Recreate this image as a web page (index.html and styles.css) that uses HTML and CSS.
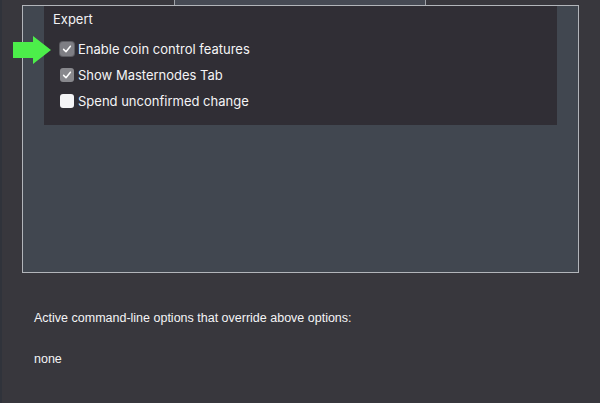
FILE: index.html
```html
<!DOCTYPE html>
<html>
<head>
<meta charset="utf-8">
<link rel="stylesheet" href="styles.css">
</head>
<body>
<div class="page">
  <div class="tabbar"><div class="tab"></div></div>
  <div class="frame">
    <div class="panel">
      <div class="title">Expert</div>
      <div class="row">
        <span class="box checked focus"><svg viewBox="0 0 14 14" width="14" height="14"><path d="M3.6 7.4 L6 9.8 L10.4 4.2" fill="none" stroke="#fff" stroke-width="1.5" stroke-linecap="round" stroke-linejoin="round"/></svg></span>
        <span class="label">Enable coin control features</span>
      </div>
      <div class="row">
        <span class="box checked"><svg viewBox="0 0 14 14" width="14" height="14"><path d="M3.6 7.4 L6 9.8 L10.4 4.2" fill="none" stroke="#fff" stroke-width="1.5" stroke-linecap="round" stroke-linejoin="round"/></svg></span>
        <span class="label">Show Masternodes Tab</span>
      </div>
      <div class="row">
        <span class="box empty"></span>
        <span class="label">Spend unconfirmed change</span>
      </div>
    </div>
  </div>
  <div class="info">
    <p class="line">Active command-line options that override above options:</p>
    <p class="line none">none</p>
  </div>
  <svg class="arrow" viewBox="0 0 60 70" width="60" height="70">
    <polygon points="13,42 33,42 33,36 51,50 33,64 33,58 13,58" fill="#4cee4a"/>
  </svg>
</div>
</body>
</html>
```

FILE: styles.css
```css
html, body {
  margin: 0;
  padding: 0;
  background: #38373d;
}
.page {
  position: relative;
  width: 600px;
  height: 403px;
  overflow: hidden;
  background: #38373d;
  border-left: 2px solid #30333b;
  box-sizing: border-box;
}
.tabbar {
  height: 5px;
  display: flex;
}
.tab {
  margin-left: 172px;
  width: 250px;
  height: 5px;
  background: #464a54;
  border-left: 1px solid #9fa2a8;
  border-right: 1px solid #9fa2a8;
}
.frame {
  margin-left: 20px;
  width: 557px;
  height: 268px;
  box-sizing: border-box;
  border: 1px solid #b2b5ba;
  background: #414750;
}
.panel {
  margin-left: 21px;
  width: 513px;
  height: 119px;
  box-sizing: border-box;
  background: #302e35;
  padding-top: 5px;
  font-family: Inter, "Liberation Sans", sans-serif;
  color: #f2f2f4;
}
.title {
  padding-left: 9px;
  font-size: 13px;
  line-height: 16px;
  margin-bottom: 9px;
}
.row {
  display: flex;
  align-items: center;
  height: 26px;
  padding-left: 16px;
  gap: 4px;
}
.box {
  width: 14px;
  height: 14px;
  border-radius: 3px;
  box-sizing: border-box;
  display: flex;
}
.box.checked {
  background: #88888d;
}
.box.focus {
  background: #7e7e84;
  box-shadow: 0 0 0 1px #5c5c62;
}
.box.empty {
  background: #f4f4f6;
}
.label {
  font-size: 13px;
  line-height: 16px;
  color: #f4f4f6;
}
.info {
  margin-top: 38px;
  padding-left: 32px;
  font-family: "Liberation Sans", Arial, sans-serif;
  font-size: 12.5px;
  color: #f4f4f6;
}
.line {
  margin: 0;
  line-height: 14px;
}
.none {
  margin-top: 27px;
}
.arrow {
  position: absolute;
  left: -2px;
  top: 0;
}
```
